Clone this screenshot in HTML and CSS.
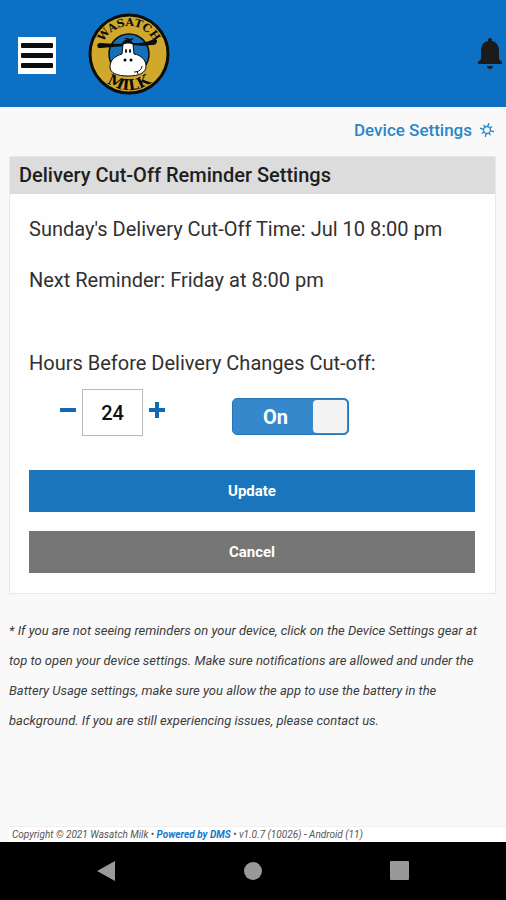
FILE: index.html
```html
<!DOCTYPE html>
<html lang="en">
<head>
<meta charset="utf-8">
<meta name="viewport" content="width=device-width, initial-scale=1">
<title>Delivery Cut-Off Reminder Settings</title>
<link rel="stylesheet" href="styles.css">
</head>
<body>
<header class="topbar">
  <button class="menu" type="button" aria-label="Menu">
    <span class="menu-bar"></span><span class="menu-bar"></span><span class="menu-bar"></span>
  </button>
  <svg class="logo" viewBox="0 0 82 82" role="img" aria-label="Wasatch Milk">
    <defs>
      <path id="arc-top" d="M13 41a28 28 0 0 1 56 0"/>
      <path id="arc-bottom" d="M5 41a36 36 0 0 0 72 0"/>
    </defs>
    <circle cx="41" cy="41" r="39" fill="#d0a82c" stroke="#0b0d0c" stroke-width="3"/>
    <circle cx="41" cy="41" r="20" fill="#1670b8" stroke="#0b0d0c" stroke-width="1.500"/>
    <path d="M13 30c-5-1-5 6 0 5 8-1 14-1 24-2l8-1c9 1 14 1 18 0 7 1 8-7 3-6-8 4-13 4-20 4-13 1-24 1-33 0z" fill="#0b0d0c"/>
    <path d="M35 31c3-2 7-2 10 0l1 10c7 1 12 6 12 12 0 7-7 10-18 10s-18-3-18-9c0-7 5-11 12-13z" fill="#fff" stroke="#0b0d0c" stroke-width="1"/>
    <path d="M34 32c0-3 2-5 5-5l-3-2c3 0 5 0 6 1l4-1-3 3 4 4c-4-2-9-2-13 0z" fill="#0b0d0c"/>
    <ellipse cx="38" cy="38" rx="1" ry="2"/><ellipse cx="42" cy="38" rx="1" ry="2"/>
    <ellipse cx="37" cy="47" rx="1.500" ry="1.500"/><ellipse cx="43" cy="47" rx="1.500" ry="1.500"/>
    <path d="M46 59c5 0 8-3 8-6M50 61l-1-3" fill="none" stroke="#0b0d0c" stroke-width="1"/>
    <text class="logo-top"><textPath href="#arc-top" startOffset="50%">WASATCH</textPath></text>
    <text class="logo-bottom"><textPath href="#arc-bottom" startOffset="50%">MILK</textPath></text>
  </svg>
  <button class="bell" type="button" aria-label="Notifications">
    <svg viewBox="0 0 24 31" width="24" height="31" fill="#1b1b1b">
      <path d="M12 0c2 0 2 1 2 3 5 1 7 5 7 10v8l3 3v2H0v-2l3-3v-8C3 8 5 4 10 3c0-2 0-3 2-3zM9 28h6c0 4-6 4-6 0z"/>
    </svg>
  </button>
</header>
<main class="content">
  <a class="device" href="#">Device Settings
    <svg viewBox="0 0 16 16" width="14" height="14" fill="none" stroke="currentColor" stroke-width="1.500">
      <circle cx="8" cy="8" r="4"/>
      <path d="M12 9l4 1M10 11l2 3M7 12l-1 4M5 10l-3 2M4 7L0 6M6 5L4 2M9 4l1-4M11 6l3-2"/>
    </svg>
  </a>
  <form class="card">
    <h1 class="card-title">Delivery Cut-Off Reminder Settings</h1>
    <div class="card-body">
      <p class="line">Sunday's Delivery Cut-Off Time: Jul 10 8:00 pm</p>
      <p class="line">Next Reminder: Friday at 8:00 pm</p>
      <label class="line hours-label" for="hours">Hours Before Delivery Changes Cut-off:</label>
      <div class="controls">
        <div class="stepper">
          <button class="step" type="button" aria-label="Decrease"><svg viewBox="0 0 16 16" width="16" height="16"><path d="M0 8h16"/></svg></button>
          <input class="hours" id="hours" type="text" inputmode="numeric" value="24">
          <button class="step" type="button" aria-label="Increase"><svg viewBox="0 0 16 16" width="16" height="16"><path d="M0 8h16M8 0v16"/></svg></button>
        </div>
        <label class="switch">
          <input class="switch-input" type="checkbox" role="switch" checked>
          <span class="switch-text">On</span>
          <span class="switch-knob"></span>
        </label>
      </div>
      <button class="action update" type="button">Update</button>
      <button class="action cancel" type="button">Cancel</button>
    </div>
  </form>
  <p class="note">* If you are not seeing reminders on your device, click on the Device Settings gear at top to open your device settings. Make sure notifications are allowed and under the Battery Usage settings, make sure you allow the app to use the battery in the background. If you are still experiencing issues, please contact us.</p>
</main>
<footer class="footer">Copyright © 2021 Wasatch Milk • <a class="powered" href="#">Powered by DMS</a> • v1.0.7 (10026) - Android (11)</footer>
<nav class="system" aria-label="System navigation">
  <button class="system-button" type="button" aria-label="Back"><svg viewBox="0 0 20 20" width="20" height="20"><path d="M0 10L18 0v20z"/></svg></button>
  <button class="system-button" type="button" aria-label="Home"><svg viewBox="0 0 20 20" width="20" height="20"><circle cx="10" cy="10" r="9"/></svg></button>
  <button class="system-button" type="button" aria-label="Recent apps"><svg viewBox="0 0 20 20" width="20" height="20"><rect x="1" width="19" height="19" rx="1"/></svg></button>
</nav>
</body>
</html>
```
FILE: styles.css
```css
* { box-sizing: border-box; }

body {
  margin: 0;
  min-height: 100vh;
  display: flex;
  flex-direction: column;
  background: #f9f9f9;
  color: #303030;
  font-family: Roboto, "Liberation Sans", sans-serif;
}

button {
  padding: 0;
  border: 0;
  background: none;
  font: inherit;
  cursor: pointer;
}

svg { display: block; }

.topbar {
  display: flex;
  align-items: center;
  height: 107px;
  padding: 0 4px 0 18px;
  background: #0c70c5;
}

.menu {
  display: grid;
  align-content: center;
  justify-content: center;
  gap: 5px;
  width: 38px;
  height: 37px;
  margin-top: 4px;
  background: #fff;
}

.menu-bar {
  width: 32px;
  height: 5px;
  border-radius: 1px;
  background: #0c0c0c;
}

.logo {
  width: 82px;
  height: 82px;
  margin-left: 32px;
}

.logo text {
  font-family: "DejaVu Serif", serif;
  font-weight: 700;
  text-anchor: middle;
  fill: #0b0d0c;
}

.logo .logo-top { font-size: 11px; }
.logo .logo-bottom { font-size: 15px; }

.bell { margin-left: auto; }

.content {
  flex: 1;
  display: flex;
  flex-direction: column;
  padding: 0 10px 0 9px;
}

.device {
  align-self: flex-end;
  display: flex;
  align-items: center;
  gap: 8px;
  height: 49px;
  padding: 0 2px 4px 0;
  color: #2b86c8;
  font-size: 17px;
  font-weight: 500;
  text-decoration: none;
}

.card {
  border: 1px solid #e8e8e8;
  background: #fefefe;
}

.card-title {
  margin: 0;
  padding: 0 9px;
  background: #dcdcdc;
  color: #1e1e1e;
  font-size: 20px;
  font-weight: 500;
  line-height: 37px;
}

.card-body {
  display: flex;
  flex-direction: column;
  padding: 20px 20px 20px 19px;
}

.line {
  margin: 0 0 20px;
  font-size: 20px;
  line-height: 31px;
}

.hours-label { margin: 32px 0 10px; }

.controls {
  display: flex;
  align-items: center;
  gap: 67px;
  margin: 0 0 34px 31px;
}

.stepper {
  display: flex;
  align-items: center;
  gap: 6px;
}

.step {
  padding-bottom: 6px;
  fill: none;
  stroke: #1268b3;
  stroke-width: 4;
}

.hours {
  width: 61px;
  height: 47px;
  padding: 0;
  border: 1px solid #b9b9b9;
  background: #fff;
  color: #111;
  font: 500 20px Roboto, sans-serif;
  text-align: center;
}

.switch {
  display: grid;
  grid-template-columns: 1fr 36px;
  align-items: center;
  width: 117px;
  height: 37px;
  margin-top: 8px;
  color: #fff;
  font-size: 20px;
  font-weight: 700;
  text-align: center;
}

.switch-input {
  grid-area: 1 / 1 / 2 / 3;
  appearance: none;
  width: 100%;
  height: 100%;
  margin: 0;
  border: 1px solid #2376b8;
  border-radius: 5px;
  background: #3488cb;
}

.switch-text {
  grid-area: 1 / 1;
  padding-left: 6px;
}

.switch-knob {
  grid-area: 1 / 2;
  height: 33px;
  margin-right: 2px;
  border-radius: 4px;
  background: #f4f4f4;
}

.action {
  height: 42px;
  color: #fff;
  font-size: 15px;
  font-weight: 700;
}

.update {
  margin-bottom: 19px;
  background: #1a75bc;
}

.cancel { background: #767676; }

.note {
  margin: 22px 0 0;
  color: #3c3c3c;
  font-size: 13px;
  font-style: italic;
  line-height: 30px;
}

.footer {
  margin-left: 9px;
  padding-left: 3px;
  border-top: 1px solid #f0f0f0;
  background: #fff;
  color: #555;
  font-size: 10px;
  font-style: italic;
  line-height: 15px;
}

.powered {
  color: #1678c8;
  font-weight: 700;
  text-decoration: none;
}

.system {
  display: flex;
  justify-content: center;
  align-items: center;
  gap: 126px;
  height: 58px;
  background: #000;
}

.system-button { fill: #999; }
```
